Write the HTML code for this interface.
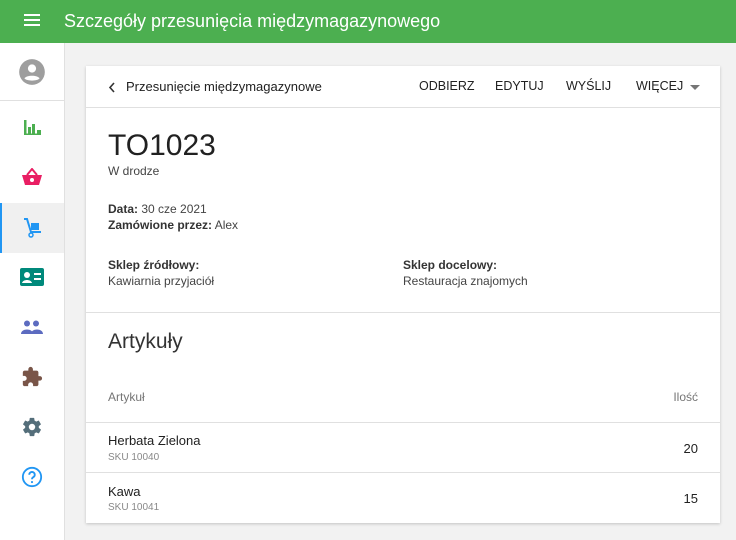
<!DOCTYPE html>
<html><head><meta charset="utf-8"><style>
*{box-sizing:border-box;margin:0;padding:0}
body{width:736px;height:540px;overflow:hidden;background:#f2f2f2;font-family:"Liberation Sans",sans-serif;color:#212121;position:relative}
.hdr{position:absolute;left:0;top:0;width:736px;height:43px;background:#4caf50;color:#fff}
.hdr .t{position:absolute;left:64px;top:11px;font-size:18px}
.side{position:absolute;left:0;top:43px;width:65px;height:497px;background:#fff;border-right:1px solid #e0e0e0}
.it{position:absolute;left:0;width:64px;height:50px;display:flex;align-items:center;justify-content:center}
.card{position:absolute;left:86px;top:66px;width:634px;height:457px;background:#fff;box-shadow:0 1px 3px rgba(0,0,0,.2)}
.tb{height:42px;border-bottom:1px solid #e0e0e0;position:relative;font-size:13px}
.tb span{position:absolute;top:13px}
.tb span.bt{font-size:12.5px;top:13px}
.sm{font-size:12px;line-height:16px}
.b{font-weight:bold;color:#333}
.row{position:absolute;left:0;width:634px;border-top:1px solid #e0e0e0;font-size:13px}
</style></head><body>
<div class="hdr">
<svg style="position:absolute;left:24px;top:14px" width="16" height="12"><rect y="0" width="16" height="2" fill="#fff"/><rect y="5" width="16" height="2" fill="#fff"/><rect y="10" width="16" height="2" fill="#fff"/></svg>
<div class="t">Szczegóły przesunięcia międzymagazynowego</div></div>
<div class="side">
<div style="position:absolute;left:0;top:57px;width:64px;height:1px;background:#e0e0e0"></div>
<div class="it" style="top:4px"><svg width="28" height="28" viewBox="0 0 24 24"><circle cx="12" cy="12" r="11" fill="#9e9e9e"/><circle cx="12" cy="9" r="3.5" fill="#fff"/><path d="M5.5 17.5c2-3 11-3 13 0c-2 2.5-11 2.5-13 0z" fill="#fff"/></svg></div>
<div class="it" style="top:59px"><svg width="19" height="17"><rect x="1" y="1" width="2.5" height="15" fill="#4caf50"/><rect x="5" y="8" width="3" height="8" fill="#4caf50"/><rect x="9" y="5" width="3" height="11" fill="#4caf50"/><rect x="14" y="11" width="4" height="5" fill="#4caf50"/><rect x="1" y="14.5" width="17" height="1.5" fill="#4caf50"/></svg></div>
<div class="it" style="top:109px"><svg width="22" height="18"><path d="M6 7L11 1L16 7" stroke="#e91e63" stroke-width="2" fill="none"/><path d="M1 7H21L18 17H4Z" fill="#e91e63"/><circle cx="11" cy="12" r="2" fill="#fff"/></svg></div>
<div class="it" style="top:160px;background:#f0f0f0;border-left:2px solid #2196f3"><svg width="22" height="22"><path d="M2 2h3l4 13h10" stroke="#2196f3" stroke-width="2" fill="none"/><rect x="9" y="6" width="8" height="7" fill="#2196f3"/><circle cx="9" cy="18" r="2" stroke="#2196f3" stroke-width="1.5" fill="none"/></svg></div>
<div class="it" style="top:209px"><svg width="24" height="18"><rect width="24" height="18" rx="2" fill="#00897b"/><circle cx="7" cy="7" r="3" fill="#fff"/><path d="M2 15c1-4 9-4 10 0z" fill="#fff"/><rect x="14" y="5" width="7" height="2" fill="#fff"/><rect x="14" y="10" width="7" height="2" fill="#fff"/></svg></div>
<div class="it" style="top:259px"><svg width="22" height="14"><circle cx="6" cy="3.5" r="3" fill="#5c6bc0"/><circle cx="15" cy="3.5" r="3" fill="#5c6bc0"/><path d="M0 14c0-6 12-6 12 0z M10 14c0-6 12-6 12 0z" fill="#5c6bc0"/></svg></div>
<div class="it" style="top:309px"><svg width="22" height="22" viewBox="0 0 24 24"><path d="M20.5 11H19V7c0-1.1-.9-2-2-2h-4V3.5a2.5 2.5 0 0 0-5 0V5H4c-1.1 0-2 .9-2 2v3.8h1.5c1.5 0 2.7 1.2 2.7 2.7S5 16.2 3.5 16.2H2V20c0 1.1.9 2 2 2h3.8v-1.5c0-1.5 1.2-2.7 2.700-2.7s2.7 1.2 2.7 2.7V22H17c1.1 0 2-.9 2-2v-4h1.5a2.5 2.5 0 0 0 0-5z" fill="#795548"/></svg></div>
<div class="it" style="top:359px"><svg width="22" height="22" viewBox="0 0 24 24"><path d="M19.4 13c.04-.3.06-.6.06-1s-.02-.7-.07-1l2.1-1.6c.2-.15.24-.42.12-.64l-2-3.46c-.12-.22-.38-.3-.6-.22l-2.5 1c-.5-.4-1.100-.7-1.7-1l-.38-2.650A.49.49 0 0 0 14 2h-4c-.25 0-.46.18-.49.42l-.38 2.65c-.6.25-1.2.6-1.7 1l-2.5-1c-.23-.08-.48 0-.6.22l-2 3.460c-.13.22-.07.49.12.64L4.57 11c-.05.3-.07.7-.07 1s.02.7.07 1l-2.1 1.6c-.2.15-.25.42-.13.64l2 3.46c.12.22.38.3.6.22l2.5-1c.5.4 1.1.7 1.7 1l.38 2.65c.03.24.24.42.49.42h4c.25 0 .46-.18.49-.42l.38-2.65c.6-.25 1.2-.6 1.7-1l2.5 1c.23.08.48 0 .6-.22l2-3.46c.12-.22.07-.49-.12-.64L19.4 13zM12 15.5A3.5 3.5 0 1 1 12 8.5a3.5 3.5 0 0 1 0 7z" fill="#546e7a"/></svg></div>
<div class="it" style="top:409px"><svg width="22" height="22" viewBox="0 0 24 24"><circle cx="12" cy="12" r="10" stroke="#2196f3" stroke-width="2" fill="none"/><path d="M9 9.5a3 3 0 1 1 4.5 2.6c-1 .6-1.5 1.2-1.5 2.4" stroke="#2196f3" stroke-width="2" fill="none"/><circle cx="12" cy="17.5" r="1.2" fill="#2196f3"/></svg></div>
</div>
<div class="card">
<div class="tb">
<svg style="position:absolute;left:22px;top:16px" width="8" height="11"><path d="M6 1L2 5.5L6 10" stroke="#333" stroke-width="1.6" fill="none"/></svg>
<span style="left:40px">Przesunięcie międzymagazynowe</span>
<span class="bt" style="left:333px">ODBIERZ</span><span class="bt" style="left:409px">EDYTUJ</span><span class="bt" style="left:480px">WYŚLIJ</span><span class="bt" style="left:550px">WIĘCEJ</span>
<svg style="position:absolute;left:604px;top:19px" width="10" height="5"><path d="M0 0h10L5 5z" fill="#757575"/></svg>
</div>
<div style="position:absolute;left:22px;top:63px;font-size:30px;color:#212121">TO1023</div>
<div class="sm" style="position:absolute;left:22px;top:97px;color:#444">W drodze</div>
<div class="sm" style="position:absolute;left:22px;top:135px;color:#444"><span class="b">Data:</span> 30 cze 2021<br><span class="b">Zamówione przez:</span> Alex</div>
<div class="sm" style="position:absolute;left:22px;top:191px;color:#444"><span class="b">Sklep źródłowy:</span><br>Kawiarnia przyjaciół</div>
<div class="sm" style="position:absolute;left:317px;top:191px;color:#444"><span class="b">Sklep docelowy:</span><br>Restauracja znajomych</div>
<div class="row" style="top:246px"></div>
<div style="position:absolute;left:22px;top:264px;font-size:21px;color:#333">Artykuły</div>
<div style="position:absolute;left:22px;top:324px;font-size:12px;color:#757575">Artykuł</div>
<div style="position:absolute;right:22px;top:324px;font-size:12px;color:#757575">Ilość</div>
<div class="row" style="top:356px;height:50px"><div style="position:absolute;left:22px;top:10px">Herbata Zielona</div><div style="position:absolute;left:22px;top:29px;font-size:10px;color:#888">SKU 10040</div><div style="position:absolute;right:22px;top:18px">20</div></div>
<div class="row" style="top:406px;height:51px"><div style="position:absolute;left:22px;top:11px">Kawa</div><div style="position:absolute;left:22px;top:29px;font-size:10px;color:#888">SKU 10041</div><div style="position:absolute;right:22px;top:18px">15</div></div>
</div>
</body></html>
